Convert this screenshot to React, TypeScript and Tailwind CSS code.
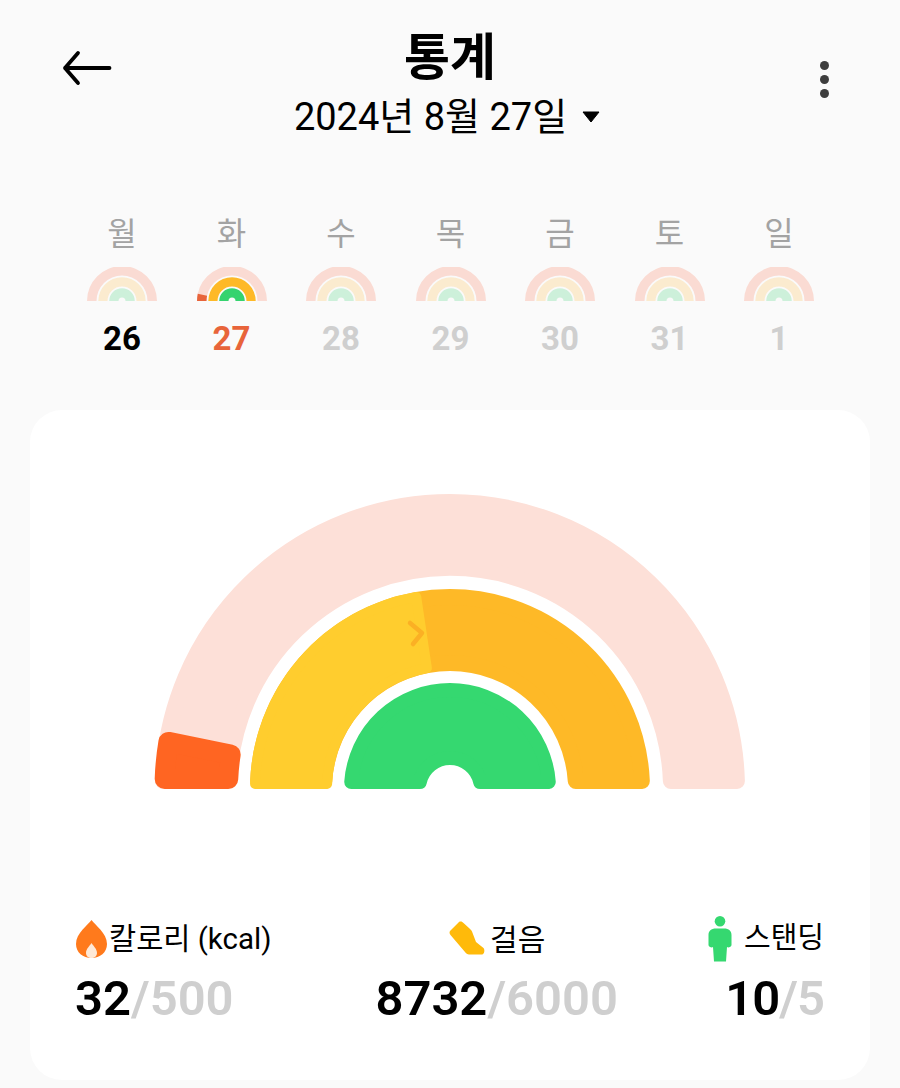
import React from "react";

const FONT = { fontFamily: '"Roboto", "Noto Sans CJK KR", sans-serif' };

function sector(R: number, r: number, a0: number, a1: number, c: number, cx: number, cy: number) {
  const oR = R - c;
  const iR = r + c;
  const pt = (rad: number, deg: number) => {
    const t = (deg * Math.PI) / 180;
    return `${(cx - rad * Math.cos(t)).toFixed(2)} ${(cy - rad * Math.sin(t)).toFixed(2)}`;
  };
  const oIn = ((c / oR) * 180) / Math.PI;
  const iIn = ((c / iR) * 180) / Math.PI;
  return `M${pt(oR, a0 + oIn)} A${oR} ${oR} 0 0 1 ${pt(oR, a1 - oIn)} L${pt(iR, a1 - iIn)} A${iR} ${iR} 0 0 0 ${pt(iR, a0 + iIn)} Z`;
}

function Seg({ R, r, a0, a1, c, cx, cy, fill }: { R: number; r: number; a0: number; a1: number; c: number; cx: number; cy: number; fill: string }) {
  return <path d={sector(R, r, a0, a1, c, cx, cy)} fill={fill} stroke={fill} strokeWidth={c * 2} strokeLinejoin="round" />;
}

function MiniRainbow({ active }: { active?: boolean }) {
  const cx = 35;
  const cy = 34;
  return (
    <svg width="70" height="34" viewBox="0 0 70 34" className="block">
      <path d={sector(35, 25.5, 0, 180, 0, cx, cy)} fill="#fadbd3" />
      <path d={sector(23.7, 14.5, 0, 180, 0, cx, cy)} fill={active ? "#feb927" : "#fbebcf"} />
      <path d={sector(12.8, 3.5, 0, 180, 0, cx, cy)} fill={active ? "#35d36f" : "#cdf0da"} />
      {active && <path d={sector(35, 25.5, 0, 12, 0, cx, cy)} fill="#e8643a" />}
    </svg>
  );
}

function Gauge() {
  const cx = 300;
  const cy = 299;
  return (
    <svg width="600" height="304" viewBox="0 0 600 304" className="block">
      <Seg R={295} r={213} a0={0} a1={180} c={8} cx={cx} cy={cy} fill="#fde0d8" />
      <Seg R={295.5} r={212} a0={0} a1={11.5} c={10} cx={cx} cy={cy} fill="#ff6522" />
      <Seg R={200} r={118} a0={0} a1={180} c={8} cx={cx} cy={cy} fill="#feb927" />
      <Seg R={200} r={118} a0={0} a1={81.5} c={5} cx={cx} cy={cy} fill="#ffcd2e" />
      <Seg R={106} r={24} a0={0} a1={180} c={7} cx={cx} cy={cy} fill="#35d870" />
      <path d="M260 133 L272 143 L263 154" fill="none" stroke="#fbb024" strokeWidth="4.5" strokeLinecap="round" strokeLinejoin="round" />
    </svg>
  );
}

const days = [
  ["월", "26"],
  ["화", "27"],
  ["수", "28"],
  ["목", "29"],
  ["금", "30"],
  ["토", "31"],
  ["일", "1"],
];

export default function App() {
  return (
    <div className="w-[900px] h-[1088px] bg-[#fafafa] overflow-hidden flex flex-col text-black" style={FONT}>
      <header className="h-[160px] pl-[62px] pr-[71px] grid grid-cols-[1fr_auto_1fr] items-start">
        <svg width="50" height="36" viewBox="0 0 50 36" className="mt-[50px]">
          <path d="M47.5 18 H3 M16 3 L3 18 L16 33" fill="none" stroke="#000" strokeWidth="3.8" strokeLinecap="round" strokeLinejoin="round" />
        </svg>
        <div className="flex flex-col items-center pt-[27px] ml-[3px]">
          <div className="text-[50px] leading-[62px] font-bold ml-[6px]">통계</div>
          <div className="flex items-center gap-[15px] text-[38px] leading-[46px] mt-[5px]">
            <span>2024년 8월 27일</span>
            <svg width="18" height="12" viewBox="0 0 18 12"><path d="M1 1 H17 L9 11 Z" fill="#000" stroke="#000" strokeWidth="1" strokeLinejoin="round" /></svg>
          </div>
        </div>
        <div className="mt-[61px] flex flex-col gap-[5px] justify-self-end">
          <span className="w-[9px] h-[9px] rounded-full bg-[#3d3d3d]" />
          <span className="w-[9px] h-[9px] rounded-full bg-[#3d3d3d]" />
          <span className="w-[9px] h-[9px] rounded-full bg-[#3d3d3d]" />
        </div>
      </header>

      <div className="flex justify-between pl-[87px] pr-[86px] mt-[50px] h-[200px]">
        {days.map(([d, n], i) => (
          <div key={d} className="w-[70px] flex flex-col items-center">
            <div className="text-[32px] leading-[48px] text-[#a3a3a3]">{d}</div>
            <div className="mt-[9px]"><MiniRainbow active={i === 1} /></div>
            <div className={`text-[33px] leading-[40px] font-bold mt-[18px] ${i === 0 ? "text-black" : i === 1 ? "text-[#e8643a]" : "text-[#cfcfcf]"}`}>{n}</div>
          </div>
        ))}
      </div>

      <main className="mx-[30px] h-[670px] bg-white rounded-[32px] flex flex-col">
        <div className="flex justify-center pt-[80px]"><Gauge /></div>
        <div className="flex justify-between pl-[45px] pr-[46px] mt-[120px]">
          <div className="flex flex-col">
            <div className="flex items-center h-[50px] text-[29.5px]">
              <svg width="33" height="40" viewBox="0 0 33 40" className="mr-[1px]">
                <path d="M16.5 1 C20 6 32 14 32 25 C32 33.5 25 39 16.5 39 C8 39 1 33.5 1 25 C1 14 13 6 16.5 1 Z" fill="#ff7a1c" />
                <path d="M16.5 24 C18.5 27 22 30 22 34 C22 37 19.5 39 16.5 39 C13.5 39 11 37 11 34 C11 30 14.5 27 16.5 24 Z" fill="#ffe9d6" />
              </svg>
              <span>칼로리 (kcal)</span>
            </div>
            <div className="text-[49px] leading-[58px] font-semibold mt-[6px]">32<span className="text-[#cfcfcf]">/500</span></div>
          </div>
          <div className="flex flex-col items-center ml-[14px]">
            <div className="flex items-center h-[50px] text-[30px] gap-[5px] ml-[1px]">
              <svg width="36" height="36" viewBox="0 0 36 36">
                <path d="M1 10 L10 1 C12 0 13.5 1 14.5 2 L20 7 C21 8 22 8.5 23 10.5 L27 21 L34.5 27 C36 29 35.5 33 33 33.5 L20 33.5 C18.5 33.5 17 32.5 16 31 L1.5 14 C0.5 13 0.2 11 1 10 Z" fill="#ffba0a" />
              </svg>
              <span>걸음</span>
            </div>
            <div className="text-[49px] leading-[58px] font-semibold mt-[6px]">8732<span className="text-[#cfcfcf]">/6000</span></div>
          </div>
          <div className="flex flex-col items-end">
            <div className="flex items-center h-[50px] text-[29px] gap-[12px]">
              <svg width="24" height="46" viewBox="0 0 24 46">
                <circle cx="12" cy="5.3" r="5.3" fill="#35d870" />
                <path d="M8 12.5 H16 C21 12.5 23.5 15 23.5 19 V29 C23.5 31 20 32 19 31 L18 45.5 H6 L5 31 C4 32 0.5 31 0.5 29 V19 C0.5 15 3 12.5 8 12.5 Z" fill="#35d870" />
              </svg>
              <span>스탠딩</span>
            </div>
            <div className="text-[49px] leading-[58px] font-semibold mt-[6px] tracking-[-1px]">10<span className="text-[#cfcfcf]">/5</span></div>
          </div>
        </div>
      </main>
    </div>
  );
}
